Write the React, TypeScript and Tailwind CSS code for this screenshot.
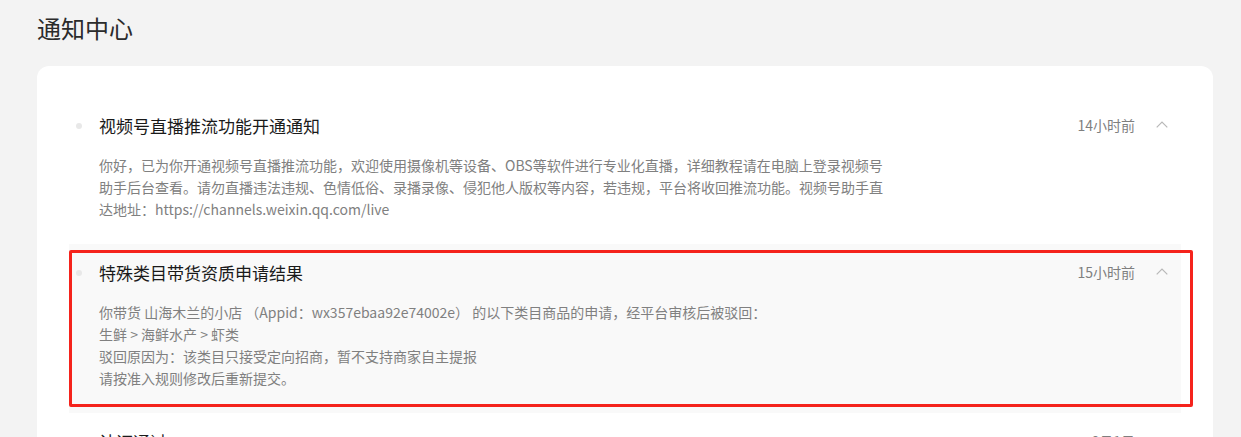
import React from 'react'

interface Notice {
  title: string
  time: string
  lines: string[]
  open: boolean
  hover?: boolean
}

const notices: Notice[] = [
  {
    title: '视频号直播推流功能开通通知',
    time: '14小时前',
    open: true,
    lines: [
      '你好，已为你开通视频号直播推流功能，欢迎使用摄像机等设备、OBS等软件进行专业化直播，详细教程请在电脑上登录视频号',
      '助手后台查看。请勿直播违法违规、色情低俗、录播录像、侵犯他人版权等内容，若违规，平台将收回推流功能。视频号助手直',
      '达地址：https://channels.weixin.qq.com/live',
    ],
  },
  {
    title: '特殊类目带货资质申请结果',
    time: '15小时前',
    open: true,
    hover: true,
    lines: [
      '你带货 山海木兰的小店 （Appid：wx357ebaa92e74002e） 的以下类目商品的申请，经平台审核后被驳回：',
      '生鲜 > 海鲜水产 > 虾类',
      '驳回原因为：该类目只接受定向招商，暂不支持商家自主提报',
      '请按准入规则修改后重新提交。',
    ],
  },
  {
    title: '认证通过',
    time: '8月1日',
    open: false,
    lines: ['你的视频号已通过认证。'],
  },
]

function Chevron({ up }: { up: boolean }) {
  return (
    <svg width="12" height="7" viewBox="0 0 12 7" fill="none" className={up ? '' : 'rotate-180'}>
      <path d="M0.7 6.3 6 1 11.3 6.3" stroke="#b8b8b8" strokeWidth="1.2" />
    </svg>
  )
}

function NoticeItem({ notice }: { notice: Notice }) {
  return (
    <div className={`relative flex pl-[7px] pr-[13px] pt-[17px] pb-[24px] ${notice.hover ? 'bg-[#f9f9f9]' : ''}`}>
      <div className="w-[23px] shrink-0 pt-[9px]">
        <div className="h-[6px] w-[6px] rounded-full bg-[#e8e8e8]" />
      </div>
      <div className="flex-1 min-w-0">
        <div className="flex items-center">
          <h3 className="flex-1 text-[17px] leading-[24px] text-[#1a1a1a]">{notice.title}</h3>
          <span className="text-[14px] leading-[20px] text-[#7f7f7f] -mt-[3px]">{notice.time}</span>
          <span className="ml-[21px] -mt-[4px] flex h-[12px] w-[12px] items-center justify-center">
            <Chevron up={notice.open} />
          </span>
        </div>
        {notice.open && (
          <div className="mt-[16px] text-[14px] leading-[22px] text-[#808080]">
            {notice.lines.map((l, i) => (
              <p key={i} className="whitespace-pre">{l}</p>
            ))}
          </div>
        )}
      </div>
      {notice.hover && (
        <div className="pointer-events-none absolute left-0 top-[6px] bottom-[6px] -right-[12px] rounded-[2px] border-[3px] border-[#f5231c]" />
      )}
    </div>
  )
}

export default function App() {
  return (
    <div
      className="min-h-[437px] bg-[#f3f3f3] pl-[37px] pr-[28px] pt-[12px]"
      style={{ fontFamily: '"Noto Sans CJK SC", "Noto Sans", sans-serif' }}
    >
      <h1 className="text-[24px] leading-[32px] text-[#2b2b2b]">通知中心</h1>
      <div className="mt-[22px] rounded-[12px] bg-white px-[32px] pt-[31px] pb-[40px]">
        {notices.map((n, i) => (
          <NoticeItem key={i} notice={n} />
        ))}
      </div>
    </div>
  )
}
